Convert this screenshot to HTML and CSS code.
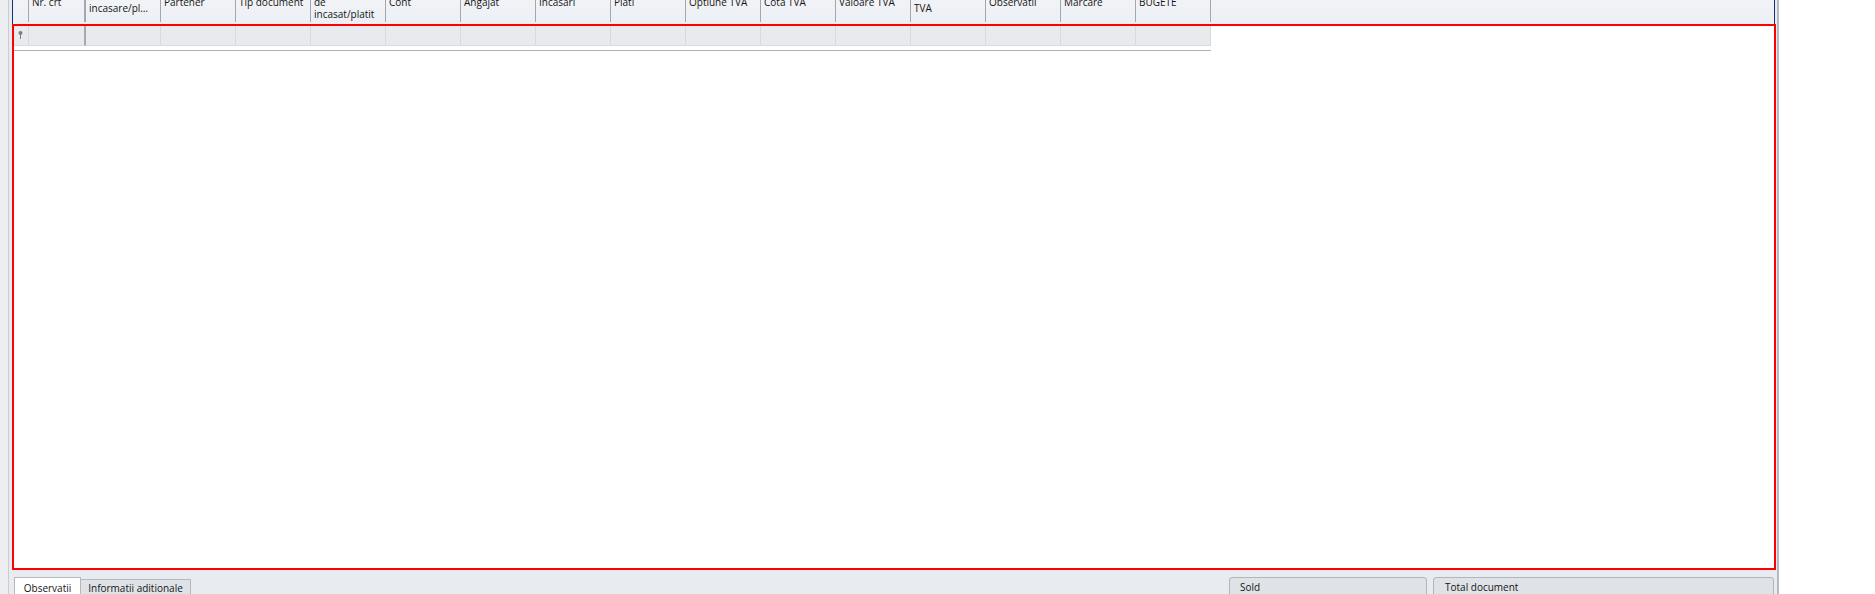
FILE: index.html
```html
<!DOCTYPE html>
<html>
<head>
<meta charset="utf-8">
<link rel="stylesheet" href="styles.css">
</head>
<body>
<div class="screen">
  <div class="gutter"></div>
  <div class="frame">
    <div class="grid">
      <div class="head-clip">
        <div class="head">
          <div class="hc ind"></div>
          <div class="hc fixed"><span>Nr. crt</span></div>
          <div class="hc"><span>Data</span><span>incasare/pl…</span></div>
          <div class="hc"><span>Partener</span></div>
          <div class="hc"><span>Tip document</span></div>
          <div class="hc"><span>Suma</span><span>de</span><span>incasat/platit</span></div>
          <div class="hc"><span>Cont</span></div>
          <div class="hc"><span>Angajat</span></div>
          <div class="hc"><span>Incasari</span></div>
          <div class="hc"><span>Plati</span></div>
          <div class="hc"><span>Optiune TVA</span></div>
          <div class="hc"><span>Cota TVA</span></div>
          <div class="hc"><span>Valoare TVA</span></div>
          <div class="hc"><span>Baza</span><span>TVA</span></div>
          <div class="hc"><span>Observatii</span></div>
          <div class="hc"><span>Marcare</span></div>
          <div class="hc"><span>BUGETE</span></div>
          <div class="hfill"></div>
        </div>
      </div>
      <div class="frow">
        <div class="fc ind">
          <svg width="5" height="8" viewBox="0 0 5 8"><circle cx="2.5" cy="2" r="2" fill="#7b7e84"/><line x1="2.5" y1="3.5" x2="2.5" y2="8" stroke="#7b7e84" stroke-width="1"/></svg>
        </div>
        <div class="fc fixed"></div>
        <div class="fc"></div><div class="fc"></div><div class="fc"></div><div class="fc"></div><div class="fc"></div>
        <div class="fc"></div><div class="fc"></div><div class="fc"></div><div class="fc"></div><div class="fc"></div>
        <div class="fc"></div><div class="fc"></div><div class="fc"></div><div class="fc"></div><div class="fc"></div>
      </div>
      <div class="end-line"></div>
      <div class="focus"></div>
    </div>
    <div class="bottom">
      <div class="tabs">
        <div class="tab active">Observatii</div>
        <div class="tab">Informatii aditionale</div>
      </div>
      <div class="totals">
        <div class="tot sold">Sold</div>
        <div class="tot total">Total document</div>
      </div>
    </div>
  </div>
</div>
</body>
</html>
```

FILE: styles.css
```css
* { box-sizing: border-box; }
html, body { margin: 0; padding: 0; }
body {
  width: 1875px;
  height: 594px;
  overflow: hidden;
  background: #ffffff;
  font-family: "Open Sans", "Noto Sans", sans-serif;
  font-size: 10px;
  color: #151515;
}
.screen { display: flex; height: 594px; }
.gutter { width: 8px; background: #eceef2; }
.frame {
  width: 1771px;
  height: 594px;
  border-left: 1px solid #c9cdd3;
  border-right: 2px solid #b5b9c0;
  padding: 0 2px 0 3px;
  background: #e8ebef;
  display: flex;
  flex-direction: column;
  overflow: hidden;
}
.grid {
  position: relative;
  flex: none;
  height: 570px;
  background: #ffffff;
  border-left: 1px solid #1f2c7c;
  border-right: 1px solid #1f2c7c;
}
.head-clip {
  height: 24px;
  overflow: hidden;
  background: linear-gradient(#f1f3f7, #eceff4);
}
.head { display: flex; height: 40px; margin-top: -18px; }
.hc {
  width: 75px;
  flex: none;
  border-right: 1px solid #a3a8b0;
  padding: 0 3px;
  display: flex;
  flex-direction: column;
  justify-content: center;
  line-height: 12px;
  white-space: nowrap;
  overflow: hidden;
}
.hc.ind { width: 16px; padding: 0; }
.hc.fixed { width: 57px; border-right: 2px solid #a3a8b0; }
.hfill { flex: 1; }
.frow { display: flex; height: 22px; }
.fc {
  width: 75px;
  flex: none;
  background: #e9eaed;
  border-right: 1px solid #d6d9de;
  border-bottom: 1px solid #d6d9de;
}
.fc.ind { width: 16px; display: flex; align-items: center; justify-content: center; padding-top: 1px; }
.fc.fixed { width: 57px; border-right: 2px solid #a5a9b0; }
.end-line { width: 1198px; height: 1px; background: #adb1b7; margin-top: 4px; }
.focus {
  position: absolute;
  left: -1px;
  top: 24px;
  width: 1764px;
  height: 546px;
  border: 2px solid #ff0000;
}
.bottom {
  display: flex;
  justify-content: space-between;
  margin-top: 7px;
  flex: none;
  height: 17px;
  overflow: hidden;
}
.tabs { display: flex; margin-left: 2px; align-items: flex-start; }
.tab {
  width: 111px;
  height: 20px;
  margin-top: 2px;
  margin-left: -1px;
  border: 1px solid #b4b9c0;
  background: #dfe3e8;
  text-align: center;
  padding-top: 2px;
  line-height: 12px;
  white-space: nowrap;
}
.tab.active {
  width: 67px;
  margin-top: 0;
  margin-left: 0;
  background: #ffffff;
  padding-top: 4px;
  position: relative;
  z-index: 1;
}
.totals { display: flex; gap: 6px; margin-right: 1px; }
.tot {
  height: 20px;
  border: 1px solid #b1b6bd;
  border-radius: 3px 3px 0 0;
  background: #dfe3e8;
  padding: 3px 10px 0;
  line-height: 12px;
  white-space: nowrap;
}
.tot.sold { width: 198px; }
.tot.total { width: 341px; padding-left: 11px; }
```
